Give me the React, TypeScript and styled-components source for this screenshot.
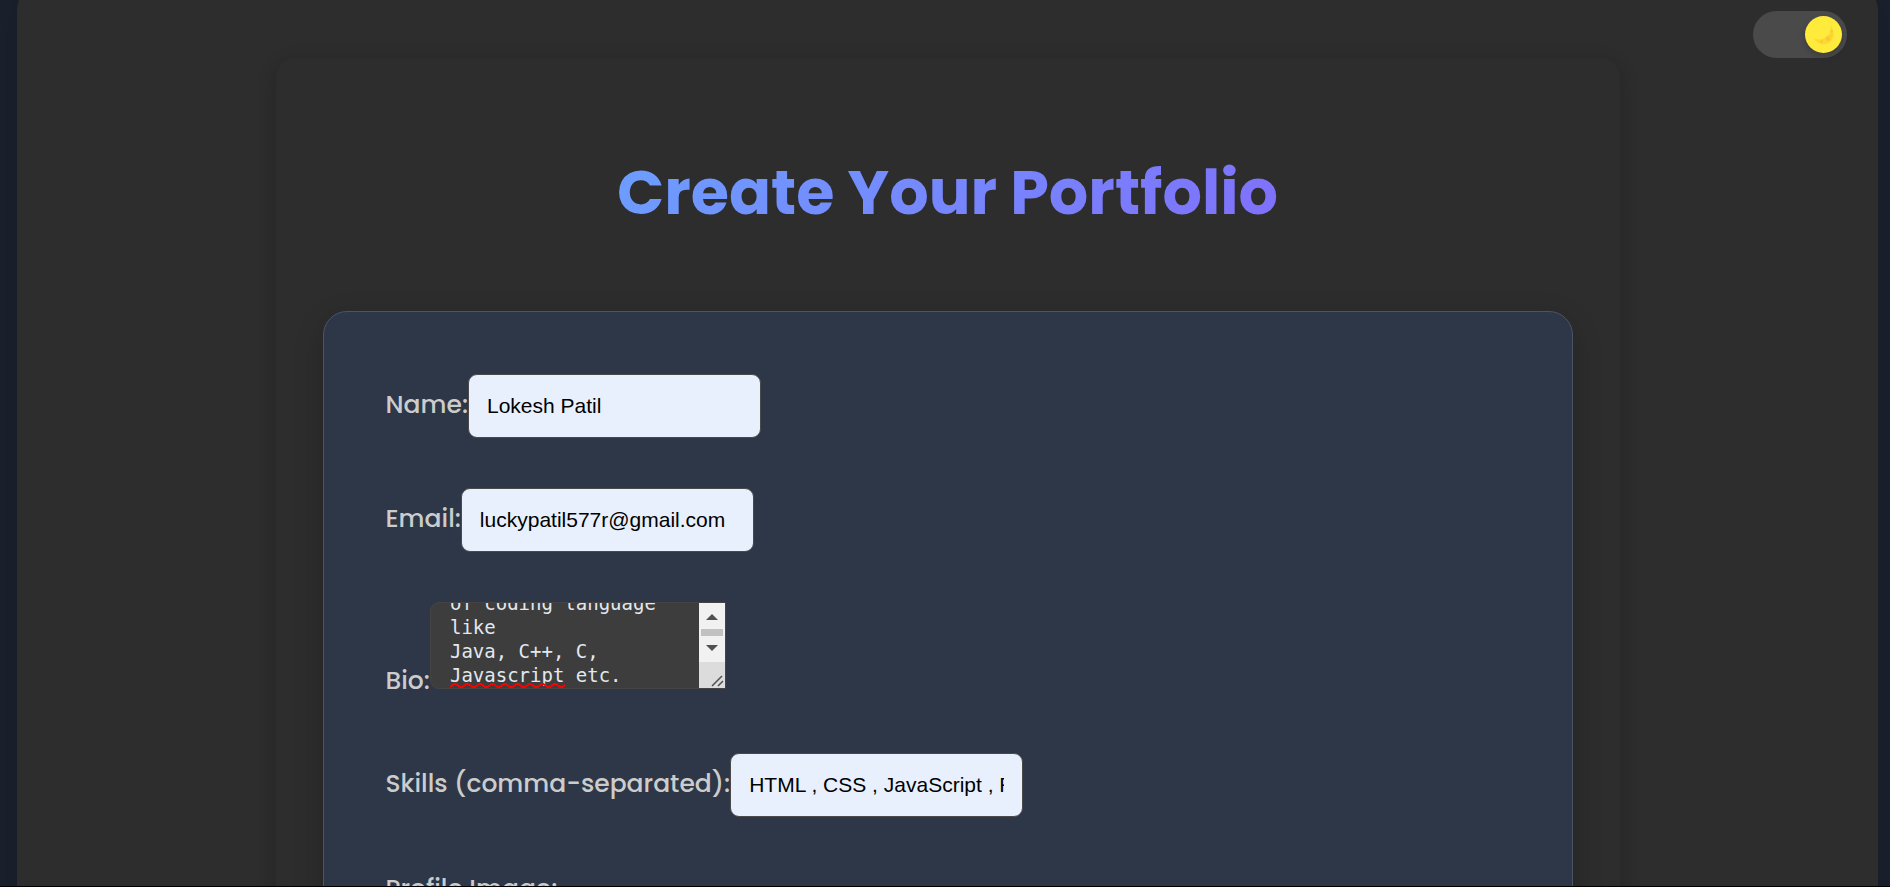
import React, { useEffect, useRef } from "react";
import styled, { createGlobalStyle } from "styled-components";

const GlobalStyle = createGlobalStyle`
  *, *::before, *::after { box-sizing: border-box; }
  body {
    margin: 0;
    background: #1a202c;
    font-family: Poppins, Inter, sans-serif;
  }
`;

const Page = styled.div`
  height: 100vh;
  overflow: hidden;
  padding: 0 12px 0 17px;
  background: #1a202c;
  border-bottom: 1px solid #000;
`;

const Panel = styled.main`
  position: relative;
  min-height: 100%;
  margin-top: -14px;
  padding: 72px 24px;
  border-radius: 24px;
  background: #2d2d2d;
  box-shadow: 0 10px 30px rgba(0, 0, 0, 0.1);
`;

const ThemeSwitch = styled.label`
  position: absolute;
  top: 25px;
  right: 31px;
  display: flex;
  width: 94px;
  height: 47px;
  cursor: pointer;
`;

const SwitchInput = styled.input`
  appearance: none;
  width: 100%;
  height: 100%;
  margin: 0;
  border-radius: 24px;
  background: #4a4a4a;
  cursor: pointer;
`;

const Knob = styled.span`
  position: absolute;
  top: 5px;
  right: 5px;
  display: grid;
  place-items: center;
  width: 37px;
  height: 37px;
  border-radius: 50%;
  background: #ffeb3b;
  box-shadow: 0 3px 6px rgba(0, 0, 0, 0.2);
  pointer-events: none;
`;

const Card = styled.section`
  max-width: 1344px;
  margin: 0 auto;
  padding: 88px 47px 47px;
  border-radius: 20px;
  background: #2d2d2d;
  box-shadow: 0 5px 20px rgba(0, 0, 0, 0.2);
`;

const Title = styled.h1`
  width: fit-content;
  margin: 0 auto 71px;
  font-size: 62px;
  line-height: 94px;
  font-weight: 700;
  white-space: nowrap;
  color: transparent;
  background: linear-gradient(135deg, #6c9fff, #806ffa);
  background-clip: text;
  -webkit-background-clip: text;
`;

const Form = styled.form`
  display: flex;
  flex-direction: column;
  gap: 50px;
  padding: 62px;
  border: 1px solid #4a5568;
  border-radius: 24px;
  background: #2d3748;
  box-shadow: 0 10px 30px rgba(0, 0, 0, 0.2);
`;

const Field = styled.div<{ $align?: string }>`
  display: flex;
  align-items: ${(p) => p.$align ?? "baseline"};
`;

const FileField = styled.div`
  display: flex;
  flex-direction: column;
  align-items: flex-start;
  padding-top: 2px;
`;

const Label = styled.label`
  font-size: 25px;
  line-height: 40px;
  font-weight: 500;
  white-space: nowrap;
  color: #cccccc;
`;

const TextInput = styled.input`
  width: 293px;
  height: 64px;
  padding: 0 18px;
  border: 1px solid #4a4a4a;
  border-radius: 9px;
  background: #e8f0fe;
  color: #000;
  font-family: Arial, "Liberation Sans", sans-serif;
  font-size: 21px;
`;

const BioBox = styled.div`
  position: relative;
  display: flex;
  width: 296px;
  height: 87px;
  margin-bottom: 14px;
  border: 1px solid #444;
  border-radius: 9px 0 0 9px;
  background: #3d3d3d;
`;

const BioLabel = styled(Label)`
  margin-bottom: 2px;
`;

const BioText = styled.textarea`
  flex: 1;
  min-width: 0;
  padding: 18px 19px;
  border: 0;
  border-radius: 8px 0 0 8px;
  outline: 0;
  resize: none;
  scrollbar-width: none;
  background: transparent;
  color: #e2e8f0;
  font-family: Consolas, "DejaVu Sans Mono", monospace;
  font-size: 19px;
  line-height: 24px;
`;

const Rail = styled.div`
  display: flex;
  flex-direction: column;
  width: 26px;
  background: #f1f1f1;
`;

const Squiggle = styled.svg`
  position: absolute;
  left: 19px;
  bottom: 0;
  width: 115px;
  height: 5px;
  pointer-events: none;
`;

const bioValue = [
  "I am a developer",
  "who knows a lot",
  "of coding language",
  "like",
  "Java, C++, C,",
  "Javascript etc.",
].join("\n");

function Moon() {
  return (
    <svg width="22" height="22" viewBox="0 0 22 22" aria-hidden="true">
      <path
        d="M17.5 1.5C21.5 6 22 12.500 18 17C13.500 22 5.500 21.500 1 14.500C6 16.500 11.500 15.500 14.500 12C17.200 9 18.300 5 17.500 1.500Z"
        fill="#fdd835"
      />
      <circle cx="15" cy="14.500" r="2.400" fill="#fbc92f" />
      <circle cx="8.500" cy="17.500" r="1.300" fill="#fbc92f" />
      <circle cx="18.500" cy="7.500" r="1.200" fill="#fbc92f" />
      <circle cx="18.500" cy="11.500" r="0.900" fill="#fbc92f" />
    </svg>
  );
}

function ScrollRail() {
  return (
    <Rail aria-hidden="true">
      <svg width="26" height="85" viewBox="0 0 26 85">
        <path d="M7 17L13 11L19 17Z" fill="#505050" />
        <rect x="2" y="26" width="22" height="7" fill="#c1c1c1" />
        <path d="M7 42L13 48L19 42Z" fill="#505050" />
        <rect y="59" width="26" height="26" fill="#dcdcdc" />
        <path d="M13 83L23 73M19 83L24 78" stroke="#505050" strokeWidth="1.500" />
      </svg>
    </Rail>
  );
}

export default function App() {
  const bioRef = useRef<HTMLTextAreaElement>(null);

  useEffect(() => {
    if (bioRef.current) bioRef.current.scrollTop = 78;
  }, []);

  return (
    <>
      <GlobalStyle />
      <Page>
        <Panel>
          <ThemeSwitch>
            <SwitchInput type="checkbox" role="switch" aria-label="Dark mode" defaultChecked />
            <Knob>
              <Moon />
            </Knob>
          </ThemeSwitch>
          <Card>
            <Title>Create Your Portfolio</Title>
            <Form>
              <Field>
                <Label htmlFor="name">Name:</Label>
                <TextInput id="name" type="text" defaultValue="Lokesh Patil" />
              </Field>
              <Field>
                <Label htmlFor="email">Email:</Label>
                <TextInput id="email" type="email" defaultValue="luckypatil577r@gmail.com" />
              </Field>
              <Field $align="flex-end">
                <BioLabel htmlFor="bio">Bio:</BioLabel>
                <BioBox>
                  <BioText id="bio" ref={bioRef} spellCheck={false} defaultValue={bioValue} />
                  <ScrollRail />
                  <Squiggle viewBox="0 0 115 5" aria-hidden="true">
                    <path
                      d={"M0 4" + Array.from({ length: 10 }, () => "l4 -3h2l4 3h2.500").join("")}
                      fill="none"
                      stroke="#f00"
                      strokeWidth="1.800"
                      strokeLinejoin="round"
                    />
                  </Squiggle>
                </BioBox>
              </Field>
              <Field>
                <Label htmlFor="skills">Skills (comma-separated):</Label>
                <TextInput id="skills" type="text" defaultValue="HTML , CSS , JavaScript , React" />
              </Field>
              <FileField>
                <Label htmlFor="profile">Profile Image:</Label>
                <input id="profile" type="file" />
              </FileField>
            </Form>
          </Card>
        </Panel>
      </Page>
    </>
  );
}
